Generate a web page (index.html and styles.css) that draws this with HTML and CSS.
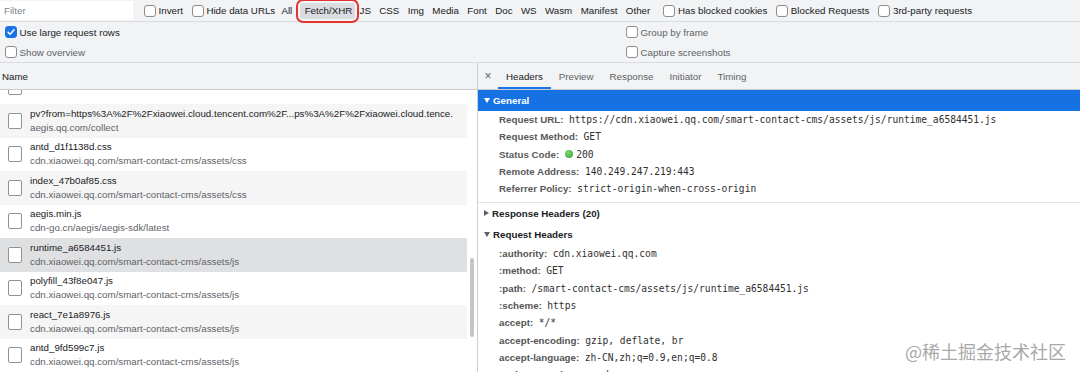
FILE: index.html
```html
<!DOCTYPE html>
<html lang="en">
<head>
    <meta charset="UTF-8">
    <meta name="viewport" content="width=device-width, initial-scale=1.0">
    <title>Network - Headers</title>
    <link rel="stylesheet" href="styles.css">
</head>
<body>
<div class="devtools">
    <div class="filter-bar">
        <div class="filter-input">Filter</div>
        <label class="opt first"><span class="check"></span>Invert</label>
        <label class="opt"><span class="check"></span>Hide data URLs</label>
        <div class="types">
            <span class="type all">All</span>
            <span class="type active">Fetch/XHR</span>
            <span class="type">JS</span>
            <span class="type">CSS</span>
            <span class="type">Img</span>
            <span class="type">Media</span>
            <span class="type">Font</span>
            <span class="type">Doc</span>
            <span class="type">WS</span>
            <span class="type">Wasm</span>
            <span class="type">Manifest</span>
            <span class="type">Other</span>
        </div>
        <label class="opt"><span class="check"></span>Has blocked cookies</label>
        <label class="opt"><span class="check"></span>Blocked Requests</label>
        <label class="opt"><span class="check"></span>3rd-party requests</label>
    </div>

    <div class="options-bar">
        <div class="options-col">
            <label class="opt-row">
                <span class="check on"><svg viewBox="0 0 12 12" width="10" height="10"><path d="M2.5 6.2 L5 8.6 L9.6 3.4" fill="none" stroke="#fff" stroke-width="1.8" stroke-linecap="round" stroke-linejoin="round"/></svg></span>Use large request rows
            </label>
            <label class="opt-row dim"><span class="check"></span>Show overview</label>
        </div>
        <div class="options-col">
            <label class="opt-row dim"><span class="check"></span>Group by frame</label>
            <label class="opt-row dim"><span class="check"></span>Capture screenshots</label>
        </div>
    </div>

    <div class="main">
        <div class="requests">
            <div class="col-head">Name</div>
            <div class="list">
                <div class="rows">
                    <div class="row"><span class="file-icon"></span><div class="req"><div class="req-name">&nbsp;</div><div class="req-url">&nbsp;</div></div></div>
                    <div class="row"><span class="file-icon"></span><div class="req"><div class="req-name">pv?from=https%3A%2F%2Fxiaowei.cloud.tencent.com%2F...ps%3A%2F%2Fxiaowei.cloud.tence.</div><div class="req-url">aegis.qq.com/collect</div></div></div>
                    <div class="row"><span class="file-icon"></span><div class="req"><div class="req-name">antd_d1f1138d.css</div><div class="req-url">cdn.xiaowei.qq.com/smart-contact-cms/assets/css</div></div></div>
                    <div class="row"><span class="file-icon"></span><div class="req"><div class="req-name">index_47b0af85.css</div><div class="req-url">cdn.xiaowei.qq.com/smart-contact-cms/assets/css</div></div></div>
                    <div class="row"><span class="file-icon"></span><div class="req"><div class="req-name">aegis.min.js</div><div class="req-url">cdn-go.cn/aegis/aegis-sdk/latest</div></div></div>
                    <div class="row selected"><span class="file-icon"></span><div class="req"><div class="req-name">runtime_a6584451.js</div><div class="req-url">cdn.xiaowei.qq.com/smart-contact-cms/assets/js</div></div></div>
                    <div class="row"><span class="file-icon"></span><div class="req"><div class="req-name">polyfill_43f8e047.js</div><div class="req-url">cdn.xiaowei.qq.com/smart-contact-cms/assets/js</div></div></div>
                    <div class="row"><span class="file-icon"></span><div class="req"><div class="req-name">react_7e1a8976.js</div><div class="req-url">cdn.xiaowei.qq.com/smart-contact-cms/assets/js</div></div></div>
                    <div class="row"><span class="file-icon"></span><div class="req"><div class="req-name">antd_9fd599c7.js</div><div class="req-url">cdn.xiaowei.qq.com/smart-contact-cms/assets/js</div></div></div>
                </div>
                <div class="track"><div class="thumb"></div></div>
            </div>
        </div>

        <div class="details">
            <div class="tabs">
                <span class="close">&times;</span>
                <span class="tab active">Headers</span>
                <span class="tab">Preview</span>
                <span class="tab">Response</span>
                <span class="tab">Initiator</span>
                <span class="tab">Timing</span>
            </div>

            <div class="section general-section">
                <div class="section-head general">
                    <svg class="arrow" viewBox="0 0 6 5" width="6" height="5"><path d="M0 0 H6 L3 5 Z" fill="#fff"/></svg>General
                </div>
                <div class="header-row"><span class="name">Request URL:</span><span class="value">https://cdn.xiaowei.qq.com/smart-contact-cms/assets/js/runtime_a6584451.js</span></div>
                <div class="header-row"><span class="name">Request Method:</span><span class="value">GET</span></div>
                <div class="header-row"><span class="name">Status Code:</span><span class="status-dot"></span><span class="value">200</span></div>
                <div class="header-row"><span class="name">Remote Address:</span><span class="value">140.249.247.219:443</span></div>
                <div class="header-row"><span class="name">Referrer Policy:</span><span class="value">strict-origin-when-cross-origin</span></div>
            </div>

            <div class="section-head">
                <svg class="arrow" viewBox="0 0 5 6" width="5" height="6"><path d="M0 0 V6 L5 3 Z" fill="#5f6368"/></svg>Response Headers (20)
            </div>
            <div class="section-head">
                <svg class="arrow" viewBox="0 0 6 5" width="6" height="5"><path d="M0 0 H6 L3 5 Z" fill="#5f6368"/></svg>Request Headers
            </div>
            <div class="header-row"><span class="name light">:authority:</span><span class="value">cdn.xiaowei.qq.com</span></div>
            <div class="header-row"><span class="name light">:method:</span><span class="value">GET</span></div>
            <div class="header-row"><span class="name light">:path:</span><span class="value">/smart-contact-cms/assets/js/runtime_a6584451.js</span></div>
            <div class="header-row"><span class="name light">:scheme:</span><span class="value">https</span></div>
            <div class="header-row"><span class="name light">accept:</span><span class="value">*/*</span></div>
            <div class="header-row"><span class="name light">accept-encoding:</span><span class="value">gzip, deflate, br</span></div>
            <div class="header-row"><span class="name light">accept-language:</span><span class="value">zh-CN,zh;q=0.9,en;q=0.8</span></div>
            <div class="header-row"><span class="name light">cache-control:</span><span class="value">no-cache</span></div>
        </div>
    </div>

    <div class="watermark">@稀土掘金技术社区</div>
</div>
</body>
</html>
```

FILE: styles.css
```css
* {
    box-sizing: border-box;
}
body {
    margin: 0;
    font-family: "Liberation Sans", Arial, sans-serif;
    font-size: 9.75px;
    color: #202124;
    background: #fff;
}
.devtools {
    position: relative;
    width: 1080px;
    height: 372px;
    overflow: hidden;
}

/* top filter bar */
.filter-bar {
    display: flex;
    align-items: center;
    height: 22px;
    background: #f1f3f4;
    border-bottom: 1px solid #dadce0;
    white-space: nowrap;
}
.filter-input {
    display: flex;
    align-items: center;
    width: 133px;
    height: 19px;
    margin-top: -1px;
    padding-left: 4px;
    background: #fff;
    color: #80868b;
}
.opt {
    display: flex;
    align-items: center;
    margin-left: 9px;
}
.opt.first {
    margin-left: 11px;
}
.check {
    display: inline-flex;
    align-items: center;
    justify-content: center;
    flex: none;
    width: 12px;
    height: 12px;
    margin-right: 2.5px;
    border: 1px solid #8d8d8d;
    border-radius: 3px;
    background: #fff;
}
.check.on {
    background: #1a73e8;
    border-color: #1a73e8;
}
.types {
    display: flex;
    margin-left: 2px;
}
.type {
    padding: 0 4.2px;
    line-height: 16px;
    border-radius: 3px;
}
.type.all {
    margin-right: 4px;
}
.type.active {
    background: #dadce0;
    padding-right: 3px;
    outline: 2px solid #e3342f;
    outline-offset: 2px;
}

/* second toolbar */
.options-bar {
    display: grid;
    grid-template-columns: 621px 1fr;
    height: 41px;
    padding-left: 5px;
    background: #f1f3f4;
    border-bottom: 1px solid #dadce0;
}
.options-col {
    display: flex;
    flex-direction: column;
}
.opt-row {
    display: flex;
    align-items: center;
    height: 20px;
}
.opt-row.dim {
    color: #5f6368;
}

/* main split */
.main {
    display: flex;
    height: 309px;
}
.requests {
    width: 478px;
    border-right: 1px solid #cbcdd1;
    display: flex;
    flex-direction: column;
}
.col-head {
    display: flex;
    align-items: center;
    height: 27px;
    padding-left: 2px;
    background: #f1f3f4;
    border-bottom: 1px solid #cbcdd1;
}
.list {
    display: flex;
    flex: 1;
    overflow: hidden;
}
.rows {
    flex: 1;
    margin-top: -19.5px;
}
.row {
    display: flex;
    align-items: center;
    height: 33.5px;
    padding-left: 8px;
    white-space: nowrap;
    overflow: hidden;
}
.row:nth-child(even) {
    background: #f5f5f5;
}
.row.selected {
    background: #dfe0e2;
}
.file-icon {
    flex: none;
    width: 14px;
    height: 16px;
    margin-right: 8px;
    border: 1px solid #8f9296;
    border-radius: 2px;
    background: #fff;
}
.req-name,
.req-url {
    line-height: 14px;
}
.req-url {
    color: #5f6368;
}
.track {
    width: 10px;
    flex: none;
}
.thumb {
    width: 4px;
    height: 79px;
    margin: 168px 0 0 3px;
    border-radius: 2px;
    background: #c6c6c6;
}

/* details panel */
.details {
    flex: 1;
    overflow: hidden;
}
.tabs {
    display: flex;
    height: 27px;
    background: #f1f3f4;
    border-bottom: 1px solid #cbcdd1;
}
.close {
    display: flex;
    align-items: center;
    justify-content: center;
    width: 20px;
    font-size: 12px;
    color: #5f6368;
}
.tab {
    display: flex;
    align-items: center;
    padding: 0 8px;
    color: #5f6368;
}
.tab.active {
    color: #202124;
    box-shadow: inset 0 -2px #1a73e8;
}
.section-head {
    display: flex;
    align-items: center;
    height: 21px;
    padding-left: 6px;
    font-weight: bold;
    color: #202124;
}
.section-head.general {
    background: #1672e2;
    color: #fff;
}
.arrow {
    margin-right: 3px;
}
.general-section {
    padding-bottom: 4.5px;
    border-bottom: 1px solid #e2e2e2;
}
.header-row {
    display: flex;
    align-items: center;
    height: 17.3px;
    padding-left: 21px;
    white-space: nowrap;
}
.name {
    margin-right: 5.5px;
    font-weight: bold;
    color: #5a5a5a;
}
.name.light {
    color: #555;
}
.value {
    font-family: "DejaVu Sans Mono", "Liberation Mono", monospace;
    font-size: 9.6px;
    color: #303030;
}
.status-dot {
    width: 8px;
    height: 8px;
    margin-right: 3.5px;
    border-radius: 50%;
    background: radial-gradient(circle at 40% 35%, #7ddc6f, #2e9d35);
}

.watermark {
    position: absolute;
    right: 14px;
    bottom: 12px;
    font-family: "Noto Sans CJK SC", sans-serif;
    font-size: 18px;
    line-height: 1;
    color: #a9a9a9;
    text-shadow: 0 0 1px #fff;
}
```
